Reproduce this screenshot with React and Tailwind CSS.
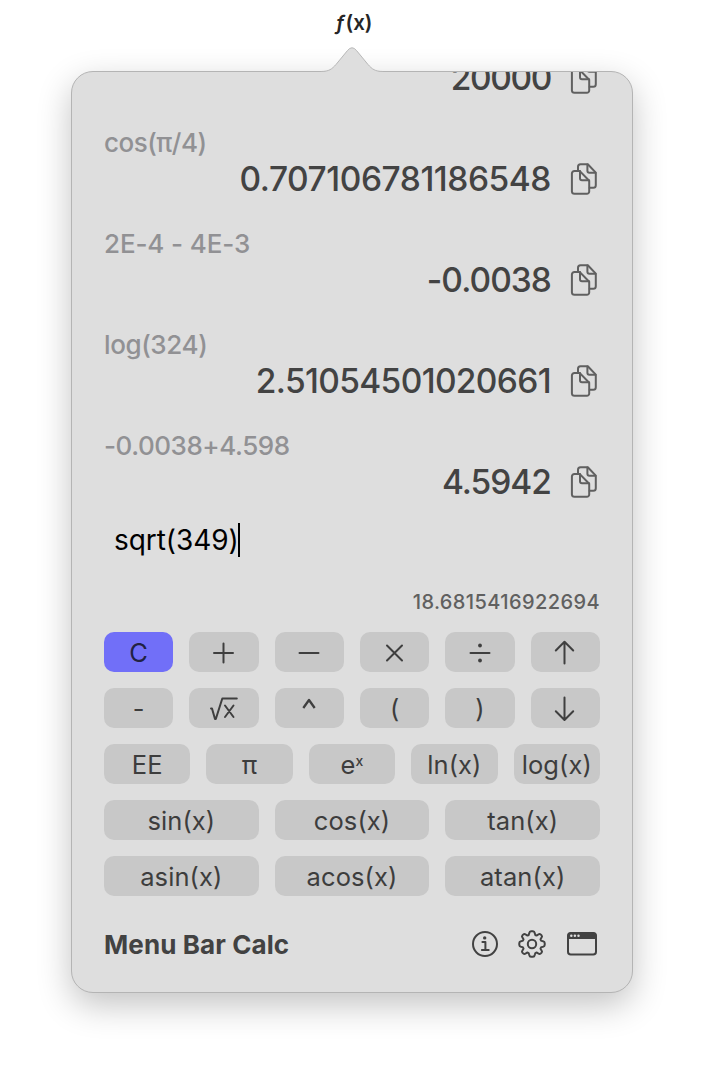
import React from 'react';

const history = [
  { expr: '', result: '20000', exprCls: '', resCls: 'tracking-[-1.4px]' },
  { expr: 'cos(π/4)', result: '0.707106781186548', exprCls: 'tracking-[-0.5px]', resCls: 'tracking-[-0.45px]' },
  { expr: '2E-4 - 4E-3', result: '-0.0038', exprCls: 'tracking-[-0.12px]', resCls: 'tracking-[-0.95px]' },
  { expr: 'log(324)', result: '2.51054501020661', exprCls: 'tracking-[-0.4px]', resCls: 'tracking-[-0.65px]' },
  { expr: '-0.0038+4.598', result: '4.5942', exprCls: 'tracking-[-0.45px]', resCls: 'tracking-[-1px]' },
];

function CopyIcon() {
  return (
    <svg className="h-8 w-7 shrink-0" viewBox="0 0 28 32" fill="none" stroke="#606060" strokeWidth="2" strokeLinejoin="round" strokeLinecap="round">
      <path d="M4.400 7.900h5.200l9.600 9.900v10.700a2.300 2.300 0 0 1-2.300 2.300H4.400a2.500 2.500 0 0 1-2.500-2.300V10.400a2.500 2.500 0 0 1 2.500-2.500" />
      <path d="M10 8v7.3a2 2 0 0 0 2 2h7" />
      <path d="M8 7.700V3.700a2.500 2.500 0 0 1 2.500-2.500h7.300l8 8.400v12.700a2.500 2.500 0 0 1-2.500 2.500h-3.600" />
      <path d="M17.400 1.400v6.300a2 2 0 0 0 2 2h6" />
    </svg>
  );
}

function Glyph({ children }) {
  return (
    <svg className="h-7 w-7" viewBox="0 0 28 28" fill="none" stroke="#3f3f3f" strokeWidth="2" strokeLinecap="round" strokeLinejoin="round">
      {children}
    </svg>
  );
}

function Key({ children, className = 'bg-[#c8c8c8] text-[#3d3d3d]' }) {
  return (
    <button className={`flex h-10 min-w-0 items-center justify-center whitespace-nowrap rounded-[10px] pt-[2px] text-[25.5px] leading-none tracking-[0.1px] ${className}`}>
      {children}
    </button>
  );
}

function IconKey({ children }) {
  return (
    <button className="flex h-10 min-w-0 items-center justify-center rounded-[10px] bg-[#c8c8c8] pt-px">
      <Glyph>{children}</Glyph>
    </button>
  );
}

function InfoIcon() {
  return (
    <svg className="h-7 w-7" viewBox="0 0 28 28" fill="none" stroke="#424242" strokeWidth="2" strokeLinecap="round" strokeLinejoin="round">
      <circle cx="14" cy="14" r="12" />
      <circle cx="13.700" cy="7.900" r="1.700" fill="#424242" stroke="none" />
      <path d="M11.400 12h3v8M10.900 20.100h6.800" />
    </svg>
  );
}

function GearIcon() {
  return (
    <svg className="h-7 w-7" viewBox="0 0 28 28" fill="none" stroke="#424242" strokeWidth="2" strokeLinejoin="round">
      <circle cx="14" cy="14" r="4.200" />
      <path
        d="M11.300 3Q11.600 1.300 13 1.300h2Q16.400 1.300 16.700 3Q17 5.300 18.400 5.500Q19 5.500 20.300 4.500Q21.600 3.500 22.600 4.400L23.600 5.400Q24.500 6.400 23.500 7.700Q22.500 9 22.500 9.600Q22.700 11 25 11.300Q26.700 11.600 26.700 13v2Q26.700 16.400 25 16.700Q22.700 17 22.500 18.400Q22.500 19 23.500 20.300Q24.500 21.600 23.600 22.600L22.600 23.600Q21.600 24.500 20.300 23.500Q19 22.500 18.400 22.500Q17 22.700 16.700 25Q16.400 26.700 15 26.700h-2Q11.600 26.700 11.300 25Q11 22.700 9.600 22.500Q9 22.500 7.700 23.500Q6.400 24.500 5.400 23.600L4.400 22.600Q3.500 21.600 4.500 20.300Q5.500 19 5.500 18.400Q5.300 17 3 16.700Q1.300 16.400 1.300 15v-2Q1.300 11.600 3 11.300Q5.300 11 5.500 9.600Q5.500 9 4.500 7.700Q3.500 6.400 4.400 5.400L5.400 4.400Q6.400 3.500 7.700 4.500Q9 5.500 9.600 5.500Q11 5.300 11.300 3Z"
      />
    </svg>
  );
}

function WindowIcon() {
  return (
    <svg className="h-6 w-[30px]" viewBox="0 0 30 24" fill="none">
      <rect x="1" y="1" width="28" height="21.500" rx="2.800" stroke="#424242" strokeWidth="2" />
      <path d="M0.500 7V4A3.500 3.500 0 0 1 4 .5h22A3.500 3.500 0 0 1 29.500 4v3z" fill="#424242" />
      <circle cx="4.300" cy="3.700" r="1.250" fill="#dedede" />
      <circle cx="7.900" cy="3.700" r="1.250" fill="#dedede" />
      <circle cx="11.500" cy="3.700" r="1.250" fill="#dedede" />
    </svg>
  );
}

export default function App() {
  return (
    <div className="flex h-[1072px] w-[704px] flex-col items-center overflow-hidden bg-white font-['Inter','Liberation_Sans',sans-serif]">
      <header className="flex h-[71px] shrink-0 items-start justify-center pl-[4px] pt-[10px] text-[20.5px] font-semibold leading-[26px] text-[#262626]">
        <span className="mr-px italic">ƒ</span>
        <span>(x)</span>
      </header>

      <main className="relative flex h-[922px] w-[562px] shrink-0 flex-col rounded-[22px] border border-[#b4b4b4] bg-[#dedede] shadow-[0_12px_34px_rgba(0,0,0,0.24)]">
        <svg className="absolute left-[249px] top-[-26px] h-[28px] w-[62px]" viewBox="0 0 62 28">
          <path d="M0 25.500C8 25.500 11 23 15 18.500L26.500 4.500Q31 -1 35.500 4.500L47 18.500C51 23 54 25.500 62 25.500V28H0Z" fill="#dedede" />
          <path d="M0 25.500C8 25.500 11 23 15 18.500L26.500 4.500Q31 -1 35.500 4.500L47 18.500C51 23 54 25.500 62 25.500" fill="none" stroke="#b8b8b8" />
        </svg>

        <section className="flex h-[428px] shrink-0 flex-col justify-end gap-[29px] overflow-hidden pl-8 pr-[34px]">
          {history.map((h) => (
            <div key={h.result} className="shrink-0">
              {h.expr && <div className={`h-9 text-[26px] font-medium leading-9 text-[#919194] ${h.exprCls}`}>{h.expr}</div>}
              <div className="flex h-9 items-center justify-end gap-[19px]">
                <span className={`pb-px text-[33.5px] font-medium leading-[34px] text-[#434343] ${h.resCls}`}>{h.result}</span>
                <CopyIcon />
              </div>
            </div>
          ))}
        </section>

        <div className="mt-5 flex h-10 shrink-0 items-center pl-[42px] text-[28px] leading-10 tracking-[-0.05px] text-black">
          <span>sqrt(349)</span>
          <span className="-ml-px h-[34px] w-[2px] bg-black" />
        </div>

        <div className="mt-[30px] h-6 shrink-0 pr-8 text-right text-[20px] font-medium leading-6 tracking-[0.4px] text-[#606060]">18.6815416922694</div>

        <section className="mt-[18px] flex flex-col gap-4 px-8">
          <div className="grid grid-cols-6 gap-4">
            <Key className="bg-[#716ff8] text-[#222243]">C</Key>
            <IconKey><path d="M4 14h19M13.500 4.500v19" /></IconKey>
            <IconKey><path d="M4.500 14h19" /></IconKey>
            <IconKey><path d="M6 6.500l15 15M21 6.500L6 21.500" /></IconKey>
            <IconKey>
              <path d="M4.500 14h19" />
              <circle cx="14" cy="6.500" r="1.900" fill="#3f3f3f" stroke="none" />
              <circle cx="14" cy="21.500" r="1.900" fill="#3f3f3f" stroke="none" />
            </IconKey>
            <IconKey><path d="M13.500 24.500V3M4.800 11.500L13.500 2.700L22.200 11.500" /></IconKey>
            <Key>-</Key>
            <IconKey><path d="M1 13.500h1L5 24h.800L12.300 3.500H26.800M15 10.500L23.500 22M23.500 10.500L15 22" /></IconKey>
            <IconKey><path d="M8.300 13L14 5L19.700 13" strokeLinecap="butt" strokeWidth="2.300" /></IconKey>
            <Key>(</Key>
            <Key>)</Key>
            <IconKey><path d="M13.500 2.500V24.500M4.800 16.300L13.500 25L22.200 16.300" /></IconKey>
          </div>
          <div className="grid grid-cols-5 gap-4">
            <Key>EE</Key>
            <Key>π</Key>
            <Key><span>e<sup className="relative -top-2 text-[14px] font-medium leading-none">x</sup></span></Key>
            <Key>ln(x)</Key>
            <Key>log(x)</Key>
          </div>
          <div className="grid grid-cols-3 gap-4">
            <Key>sin(x)</Key>
            <Key>cos(x)</Key>
            <Key>tan(x)</Key>
            <Key>asin(x)</Key>
            <Key>acos(x)</Key>
            <Key>atan(x)</Key>
          </div>
        </section>

        <footer className="mt-[28px] flex h-10 items-center justify-between pl-8 pr-[35px]">
          <h1 className="pt-[2px] text-[26px] font-bold leading-10 tracking-[0.1px] text-[#424242]">Menu Bar Calc</h1>
          <div className="flex items-center">
            <InfoIcon />
            <span className="w-[19px]" />
            <GearIcon />
            <span className="w-[21px]" />
            <WindowIcon />
          </div>
        </footer>
      </main>
    </div>
  );
}
